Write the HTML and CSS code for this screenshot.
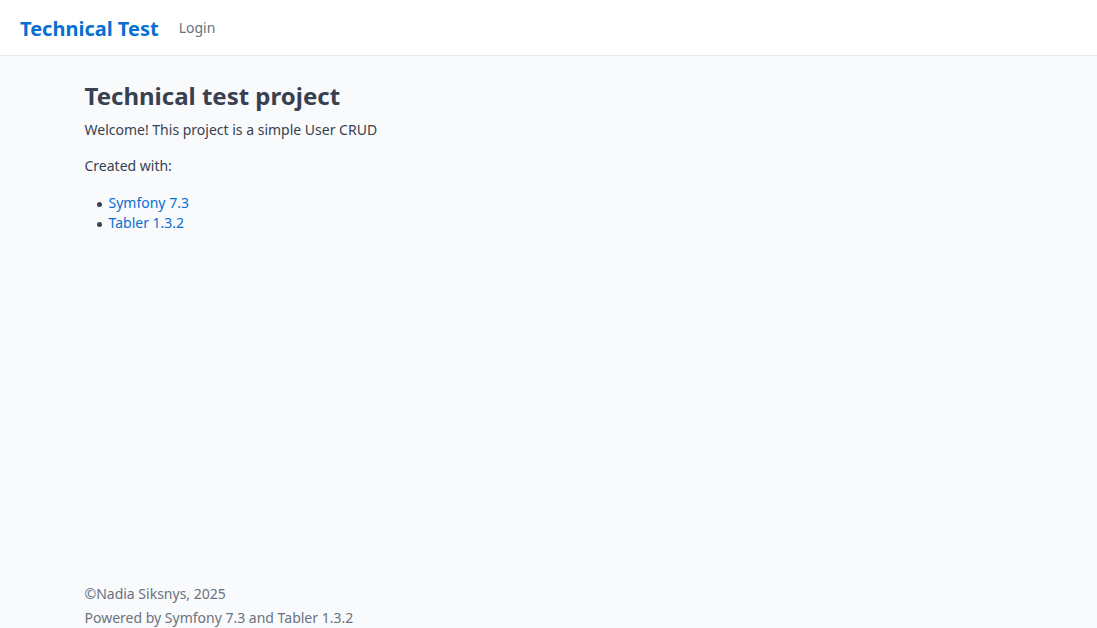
FILE: index.html
```html
<!DOCTYPE html>
<html lang="en">
<head>
<meta charset="utf-8">
<meta name="viewport" content="width=device-width, initial-scale=1">
<title>Technical Test</title>
<link rel="stylesheet" href="styles.css">
</head>
<body class="page">
  <header class="navbar">
    <a class="navbar-brand" href="#">Technical Test</a>
    <nav class="navbar-nav">
      <a class="nav-link" href="#">Login</a>
    </nav>
  </header>
  <main class="container content">
    <h1 class="title">Technical test project</h1>
    <p class="text">Welcome! This project is a simple User CRUD</p>
    <p class="text">Created with:</p>
    <ul class="list">
      <li class="list-item"><a class="link" href="#">Symfony 7.3</a></li>
      <li class="list-item"><a class="link" href="#">Tabler 1.3.2</a></li>
    </ul>
  </main>
  <footer class="container footer">
    <div>©Nadia Siksnys, 2025</div>
    <div>Powered by Symfony 7.3 and Tabler 1.3.2</div>
  </footer>
</body>
</html>
```
FILE: styles.css
```css
*,
*::before,
*::after {
  box-sizing: border-box;
}

.page {
  display: flex;
  flex-direction: column;
  min-height: 100vh;
  margin: 0;
  background: #f9fafc;
  color: #374151;
  font-family: "Noto Sans", "Liberation Sans", sans-serif;
  font-size: 14px;
  line-height: 20px;
}

.navbar {
  display: flex;
  align-items: center;
  gap: 20px;
  min-height: 56px;
  padding: 0 20px;
  background: #fff;
  border-bottom: 1px solid #e5e7eb;
}

.navbar-brand {
  padding-top: 2px;
  color: #066fd1;
  font-size: 20px;
  font-weight: 700;
  line-height: 28px;
  text-decoration: none;
}

.nav-link {
  color: #6b7280;
  text-decoration: none;
}

.container {
  width: 100%;
  max-width: 960px;
  margin: 0 auto;
  padding: 0 16px;
}

.content {
  flex: 1;
  padding-top: 24px;
}

.title {
  margin: 0 0 8px;
  font-size: 24px;
  font-weight: 700;
  line-height: 32px;
}

.text {
  margin: 0 0 16px;
}

.list {
  margin: 0 0 16px;
  padding: 1px 0 0 12px;
  list-style: none;
}

.list-item {
  display: flex;
  align-items: center;
  gap: 7px;
}

.list-item::before {
  content: "";
  width: 5px;
  height: 5px;
  margin-top: 2px;
  border-radius: 50%;
  background: currentColor;
}

.link {
  color: #066fd1;
  text-decoration: none;
}

.footer {
  display: flex;
  flex-direction: column;
  gap: 4px;
  color: #6b7280;
}
```
